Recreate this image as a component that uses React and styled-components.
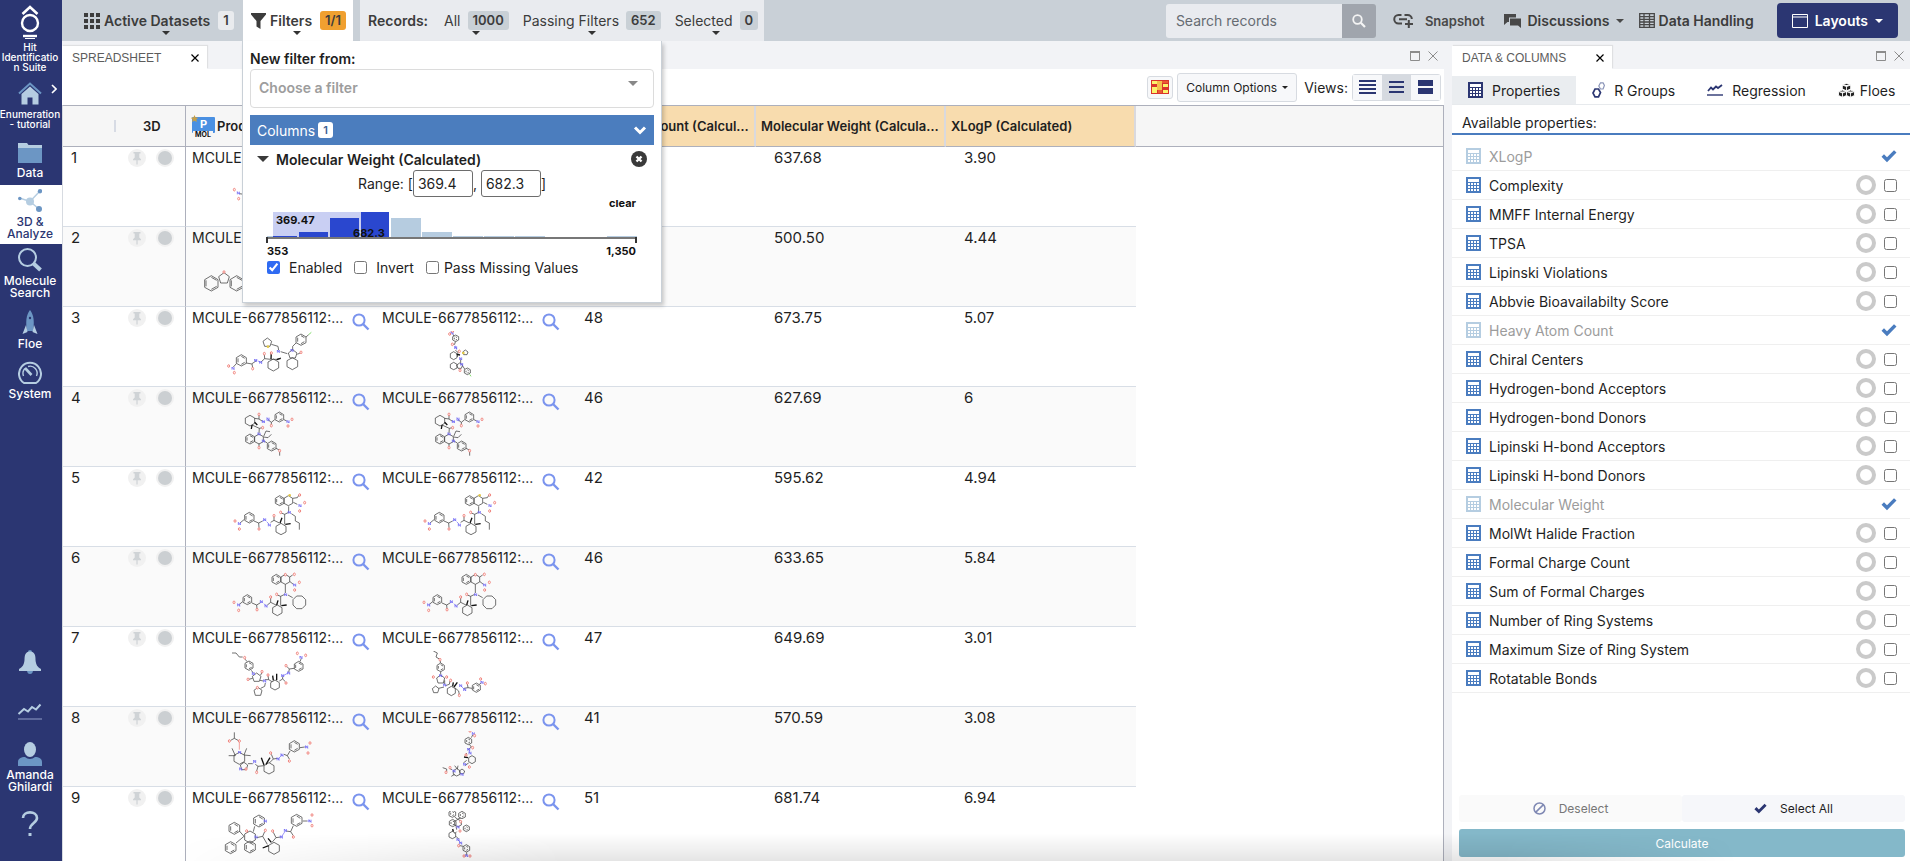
import React from "react";
import styled, { createGlobalStyle } from "styled-components";

const NAVY = "#2b3672";

const properties = [
  { name: "XLogP", added: true },
  { name: "Complexity" },
  { name: "MMFF Internal Energy" },
  { name: "TPSA" },
  { name: "Lipinski Violations" },
  { name: "Abbvie Bioavailabilty Score" },
  { name: "Heavy Atom Count", added: true },
  { name: "Chiral Centers" },
  { name: "Hydrogen-bond Acceptors" },
  { name: "Hydrogen-bond Donors" },
  { name: "Lipinski H-bond Acceptors" },
  { name: "Lipinski H-bond Donors" },
  { name: "Molecular Weight", added: true },
  { name: "MolWt Halide Fraction" },
  { name: "Formal Charge Count" },
  { name: "Sum of Formal Charges" },
  { name: "Number of Ring Systems" },
  { name: "Maximum Size of Ring System" },
  { name: "Rotatable Bonds" },
];

// rings: [cx, cy, r, sides, aromatic], k: carbon bonds, b: nitrogen bonds,
// n / o / s: atom positions, f: fluorine bond, red: oxygen bond
const mol1 = {
  rings: [[190, 145, 17, 6, 1], [260, 160, 17, 6]],
  k: "M160 140L174 142M206 150L244 156",
  n: [[157, 138]],
  o: [[145, 128], [158, 155]],
};
const mol2 = {
  rings: [[76, 169, 23, 6, 1], [114, 154, 17, 5], [152, 169, 23, 6, 1]],
  o: [[114, 135]],
};
const mol3a = {
  rings: [[166, 160, 17, 6, 1], [262, 174, 18, 6], [319, 170, 18, 6], [345, 98, 17, 6, 1], [244, 107, 14, 5], [320, 142, 14, 5]],
  k: "M151 170L142 180M181 168L198 171L200 182M198 170L210 162M225 165L236 155L235 142M236 155L254 157L272 157L285 153M256 112L276 118L278 130M284 134L304 140M320 128L320 118L330 108M360 90L368 83M334 142L344 137",
  bold: "M255 156L256 136M272 158L284 154",
  b: "M207 162L214 159M216 162L224 166",
  n: [[209, 160], [224, 166], [277, 133], [318, 130], [141, 184]],
  o: [[128, 177], [145, 197], [200, 185], [235, 140], [345, 136], [256, 138]],
  s: [[246, 119]],
  f: "M368 83L376 76",
};
const mol3b = {
  rings: [[239, 94, 10, 6, 1], [233, 146, 12, 6], [233, 177, 11, 6], [251, 177, 9, 5], [274, 193, 10, 6, 1], [268, 137, 8, 5]],
  k: "M231 82L234 88M238 104L236 112L230 112M238 130L246 136L244 150M254 157L254 170M258 174L266 186",
  bold: "M242 142L252 144",
  b: "M238 116L242 128",
  n: [[228, 78], [239, 122], [254, 155], [257, 172]],
  o: [[221, 81], [230, 72], [229, 112], [250, 133], [252, 190]],
  s: [[262, 138]],
  f: "M281 202L285 208",
};
const mol4 = {
  rings: [[192, 101, 16, 6], [280, 90, 15, 6, 1], [192, 156, 15, 6, 1], [219, 156, 15, 6], [257, 177, 15, 6, 1]],
  k: "M206 94L219 96L219 84M219 96L228 102M246 98L256 106L266 98M256 106L256 114M294 98L302 102M198 114L220 124L230 122M220 124L219 138M233 148L240 132L252 134M233 150L246 152L256 142M219 170L219 178M234 162L244 168M270 184L280 189M281 194L281 206",
  bold: "M206 106L214 114M198 114L196 126",
  b: "M228 102L236 104M242 99L250 102",
  n: [[232, 104], [246, 96], [306, 104], [219, 141], [232, 162]],
  o: [[219, 82], [256, 116], [318, 97], [306, 117], [230, 122], [219, 182], [281, 191]],
};
const mol5 = {
  rings: [[281, 101, 15, 6, 1], [307, 101, 15, 6], [190, 152, 16, 6, 1], [285, 186, 17, 6]],
  k: "M174 158L162 168M204 162L218 168L219 182M218 168L230 162M254 166L264 160L264 148M264 160L280 168M296 172L296 142L286 138M296 142L308 136L308 118M316 140L328 148L328 162L340 168L340 188M320 94L334 92L339 84M322 106L334 112",
  bold: "M282 168L288 152M298 172L314 170",
  b: "M230 162L236 160M242 164L248 170",
  n: [[160, 170], [236, 158], [250, 174], [310, 136], [342, 116]],
  o: [[147, 162], [160, 186], [219, 186], [264, 146], [284, 136], [341, 84], [356, 107], [341, 132]],
  s: [[311, 85]],
};
const mol6 = {
  rings: [[271, 97, 15, 6, 1], [298, 97, 15, 6], [184, 158, 15, 6, 1], [274, 190, 16, 6], [340, 166, 21, 8]],
  k: "M170 164L160 172M198 168L212 174L213 186M212 174L222 168M244 174L254 166L254 152M254 166L270 174M284 176L284 148L274 144M284 148L296 142M298 138L298 112M306 144L320 152M311 90L320 84M312 104L322 112",
  bold: "M272 174L276 160M286 176L302 174",
  b: "M222 168L228 164M234 170L240 176",
  n: [[158, 174], [226, 164], [240, 177], [299, 143], [326, 114]],
  o: [[144, 166], [158, 190], [213, 188], [254, 150], [272, 142], [298, 83], [325, 82], [340, 106], [326, 129]],
};
const mol7a = {
  rings: [[189, 116, 14, 6, 1], [212, 152, 14, 5], [267, 174, 15, 6], [216, 194, 13, 5], [338, 118, 15, 6, 1]],
  k: "M138 78L150 78L160 90L170 90M176 96L184 104M196 130L202 138M224 144L228 136M200 154L188 157M222 160L232 162M236 158L248 158L246 146M248 158L258 164M238 168L236 178L224 184M280 162L290 156L298 164M290 156L290 148M308 136L310 126L302 118M310 126L324 124M342 104L346 94",
  bold: "M272 160L272 140M262 160L260 146",
  b: "M292 146L306 138",
  n: [[202, 140], [236, 162], [290, 146], [308, 138], [345, 91]],
  o: [[176, 92], [228, 134], [186, 157], [246, 144], [300, 168], [300, 116], [334, 79], [359, 85], [214, 182]],
};
const mol7b = {
  rings: [[194, 121, 13, 6, 1], [194, 157, 13, 5], [226, 192, 14, 6], [179, 188, 11, 5], [301, 182, 14, 6, 1]],
  k: "M172 72L184 78L180 90L190 96M193 108L193 102M194 134L194 142M208 176L220 172L222 162M206 160L206 172M204 180L188 184M236 182L248 192L250 204M264 184L276 182L274 170M276 182L288 184M310 172L316 168",
  bold: "M234 180L244 166M230 178L232 166",
  b: "M256 178L264 186",
  n: [[194, 146], [206, 174], [254, 176], [266, 188], [318, 166]],
  o: [[192, 98], [172, 150], [212, 150], [224, 160], [250, 205], [274, 168], [314, 156], [328, 170]],
};
const mol8a = {
  rings: [[325, 118, 17, 6, 1], [160, 154, 18, 6], [174, 178, 12, 5], [249, 184, 17, 6]],
  k: "M145 76L145 94L134 100M145 94L156 100M138 124L148 146L128 146M182 124L174 144L194 146M186 170L200 170M208 172L216 178L212 192M216 178L234 176M250 168L262 156L256 142M262 156L274 154M294 142L304 146L310 156M304 146L312 132M342 122L356 120",
  bold: "M234 174L226 152M240 172L252 152",
  b: "M200 170L206 164M276 156L288 144M356 120L362 120",
  red: "M160 106L160 128",
  n: [[161, 136], [206, 163], [276, 156], [288, 144], [362, 120], [164, 186]],
  o: [[130, 102], [160, 102], [180, 186], [212, 196], [254, 138], [310, 162], [372, 108], [366, 138]],
};
const mol8b = {
  rings: [[277, 102, 11, 6, 1], [288, 158, 12, 6], [242, 196, 11, 6], [258, 194, 8, 5]],
  k: "M286 92L290 84M280 112L286 120L276 128M272 138L268 146M278 168L266 176M272 160L262 168M200 182L212 186L212 194M220 184L228 188M236 176L244 186M226 208L236 202M246 176L244 186",
  bold: "M276 152L264 150",
  b: "M278 126L282 138",
  n: [[292, 80], [278, 127], [282, 138], [266, 172], [234, 192], [258, 202]],
  o: [[282, 72], [296, 86], [290, 122], [270, 144], [222, 182], [210, 196], [280, 180]],
};
const mol9a = {
  rings: [[145, 124, 18, 6, 1], [134, 182, 18, 6, 1], [219, 102, 18, 6, 1], [192, 150, 18, 6], [192, 180, 18, 6, 1], [264, 184, 18, 6], [332, 100, 18, 6, 1]],
  k: "M160 132L174 148L150 168M202 134L206 118M212 152L230 148L236 134M230 148L244 172M258 166L270 152L262 136M270 152L284 150M300 132L314 134L322 146M314 134L322 116M350 102L364 102",
  bold: "M248 176L230 183M256 166L246 154",
  b: "M286 150L298 132M364 102L372 102",
  n: [[210, 150], [286, 150], [298, 130], [372, 102], [238, 102]],
  o: [[182, 132], [238, 130], [260, 132], [322, 150], [378, 84], [378, 116]],
};
const mol9b = {
  rings: [[229, 80, 11, 6, 1], [258, 84, 11, 6, 1], [230, 108, 11, 6, 1], [246, 108, 11, 6], [271, 124, 10, 6, 1], [229, 144, 11, 6], [271, 184, 11, 6, 1]],
  k: "M236 90L244 96L254 94M240 118L242 128M242 134L236 140M240 148L248 156M252 176L262 178M272 196L272 204",
  bold: "M232 134L230 126",
  b: "M246 158L254 168",
  n: [[246, 120], [246, 158], [254, 168], [272, 206]],
  o: [[254, 104], [252, 132], [248, 176], [264, 207], [282, 207]],
};

const records = [
  { id: 1, count: 47, weight: "637.68", logp: "3.90", product: mol1, reagent: mol1 },
  { id: 2, count: 37, weight: "500.50", logp: "4.44", product: mol2, reagent: mol2 },
  { id: 3, count: 48, weight: "673.75", logp: "5.07", product: mol3a, reagent: mol3b },
  { id: 4, count: 46, weight: "627.69", logp: "6", product: mol4, reagent: mol4 },
  { id: 5, count: 42, weight: "595.62", logp: "4.94", product: mol5, reagent: mol5 },
  { id: 6, count: 46, weight: "633.65", logp: "5.84", product: mol6, reagent: mol6 },
  { id: 7, count: 47, weight: "649.69", logp: "3.01", product: mol7a, reagent: mol7b },
  { id: 8, count: 41, weight: "570.59", logp: "3.08", product: mol8a, reagent: mol8b },
  { id: 9, count: 51, weight: "681.74", logp: "6.94", product: mol9a, reagent: mol9b },
];

const polygon = (cx, cy, r, n) =>
  Array.from({ length: n }, (_, i) => {
    const a = ((i + (n === 8 ? 0.5 : 0)) / n) * Math.PI * 2 - Math.PI / 2;
    return `${Math.round(cx + r * Math.cos(a))},${Math.round(cy + r * Math.sin(a))}`;
  });

const Molecule = ({ data }) => (
  <MoleculeSvg viewBox='0 72 570 156' aria-hidden='true'>
    <g fill='none' stroke='#3c3c3c' strokeWidth='2.2' strokeLinejoin='round'>
      {data.rings.map(([cx, cy, r, n, aromatic], i) => {
        const inner = polygon(cx, cy, r - 5, n);
        return (
          <g key={i}>
            <polygon points={polygon(cx, cy, r, n).join(" ")} />
            {aromatic &&
              [0, 2, 4].map((k) => (
                <polyline key={k} points={`${inner[k]} ${inner[k + 1] || inner[0]}`} />
              ))}
          </g>
        );
      })}
      {data.k && <path d={data.k} />}
      {data.bold && <path d={data.bold} stroke='#111' strokeWidth='4' />}
      {data.b && <path d={data.b} stroke='#7a74f5' />}
      {data.red && <path d={data.red} stroke='#f07f78' />}
      {data.f && <path d={data.f} stroke='#7fdc6a' strokeWidth='3' />}
    </g>
    {(data.n || []).map(([x, y], i) => (
      <path
        key={i}
        d={`M${x - 3} ${y + 4}v-8l6 8v-8`}
        fill='none'
        stroke='#6c64f5'
        strokeWidth='2.4'
      />
    ))}
    {data.o.map(([x, y], i) => (
      <ellipse key={i} cx={x} cy={y} rx='3' ry='4' fill='#fff' stroke='#ee6f67' strokeWidth='2.4' />
    ))}
    {(data.s || []).map(([x, y], i) => (
      <circle key={i} cx={x} cy={y} r='4' fill='#e3c94b' />
    ))}
  </MoleculeSvg>
);

const CalculatorIcon = ({ color }) => (
  <svg width='15' height='16' viewBox='0 0 15 16' shapeRendering='crispEdges' aria-hidden='true'>
    <path d='M0 0h15v16H0z' fill={color} />
    <path d='M2 2h11v3H2z' fill='#fff' />
    {[6, 9, 12].map((y) =>
      [2, 5, 8, 11].map((x) => (
        <rect key={`${x}-${y}`} x={x} y={y} width='2' height='2' fill='#fff' />
      ))
    )}
  </svg>
);

const CheckIcon = ({ color, size = 16 }) => (
  <svg width={size} height={size} viewBox='0 0 16 16' aria-hidden='true'>
    <path d='M0.5 8.8L3 6.2L6 9.2L13 2.2L15.5 4.6L6 14.2Z' fill={color} />
  </svg>
);

const GridIcon = () => (
  <svg width='16' height='16' viewBox='0 0 16 16' fill='#3c3c3c' aria-hidden='true'>
    {[0, 6, 12].map((y) =>
      [0, 6, 12].map((x) => <rect key={`${x}-${y}`} x={x} y={y} width='4' height='4' />)
    )}
  </svg>
);

const MagnifierIcon = () => (
  <svg width='18' height='18' viewBox='0 0 18 18' fill='none' stroke='#7b94ee' aria-hidden='true'>
    <circle cx='7' cy='7' r='5.6' strokeWidth='2' />
    <path d='M11 11L16.5 16.5' strokeWidth='2.4' />
  </svg>
);

const PinIcon = () => (
  <svg width='18' height='18' viewBox='0 0 18 18' aria-hidden='true'>
    <circle cx='9' cy='9' r='9' fill='#f1f1f1' />
    <path d='M5.5 3h7v1.6h-1.2v4l1.7 1.6v1H9.6v4.3H8.4v-4.3H5v-1l1.7-1.6v-4H5.5z' fill='#cfd3d6' />
  </svg>
);

const DotIcon = () => (
  <svg width='18' height='18' viewBox='0 0 18 18' aria-hidden='true'>
    <circle cx='9' cy='9' r='9' fill='#f1f1f1' />
    <circle cx='9' cy='9' r='7' fill='#cbcfd2' />
  </svg>
);

const WindowControls = () => (
  <Controls>
    <IconButton aria-label='Maximize panel'>
      <svg width='10' height='10' viewBox='0 0 10 10' aria-hidden='true'>
        <path d='M0.5 1h9v8.5h-9z' fill='none' stroke='#8c8c8c' />
        <path d='M0 1h10' stroke='#8c8c8c' strokeWidth='2' />
      </svg>
    </IconButton>
    <IconButton aria-label='Close panel'>
      <svg width='10' height='10' viewBox='0 0 10 10' aria-hidden='true'>
        <path d='M0.5 0.5l9 9M9.5 0.5l-9 9' stroke='#8c8c8c' />
      </svg>
    </IconButton>
  </Controls>
);

const PanelTab = ({ children }) => (
  <Tab>
    {children}
    <IconButton aria-label='Close tab'>
      <svg width='8' height='8' viewBox='0 0 8 8' aria-hidden='true'>
        <path d='M0.5 0.5l7 7M7.5 0.5l-7 7' stroke='#000' strokeWidth='1.2' />
      </svg>
    </IconButton>
  </Tab>
);

const Sidebar = () => (
  <Rail>
    <RailItem href='#suite' $top={5} $small>
      <svg width='20' height='34' viewBox='0 0 20 34' fill='none' stroke='#fff' aria-hidden='true'>
        <path d='M2.5 9L10 2L17.5 9' strokeWidth='2.6' />
        <circle cx='10' cy='18' r='8' strokeWidth='2.4' />
        <path d='M3 31h14' strokeWidth='2.4' />
        <path d='M5 33.5h10' strokeWidth='1' />
      </svg>
      <span>
        Hit
        <br />
        Identificatio
        <br />n Suite
      </span>
    </RailItem>
    <RailItem href='#project' $top={10} $small>
      <svg width='24' height='24' viewBox='0 0 24 24' aria-hidden='true'>
        <path d='M1 11.5L12 1.5L23 11.5' fill='none' stroke='#6c96c4' strokeWidth='2' />
        <path d='M3.5 12L12 4.5L20.5 12V22.5H14.5V15.5H9.5V22.5H3.5Z' fill='#b5cde1' />
      </svg>
      <span>
        Enumeration
        <br />- tutorial
      </span>
      <Chevron viewBox='0 0 6 10' aria-hidden='true'>
        <path d='M1 1l4 4l-4 4' fill='none' stroke='#fff' strokeWidth='1.6' />
      </Chevron>
    </RailItem>
    <RailItem href='#data' $top={13}>
      <svg width='24' height='22' viewBox='0 0 24 22' aria-hidden='true'>
        <path d='M0 1h9l1.5 2H24v3H0z' fill='#b5cde1' />
        <path d='M0 6h24v15H0z' fill='#6c96c4' />
      </svg>
      <span>Data</span>
    </RailItem>
    <RailItem href='#analyze' $top={4} $active>
      <svg width='24' height='24' viewBox='0 0 24 24' aria-hidden='true'>
        <path d='M1.5 9L12 12.5L22 2M12 12.5L21 20' stroke='#b5cde1' strokeWidth='1.5' fill='none' />
        <circle cx='12' cy='12.5' r='4' fill='#b5cde1' />
        <circle cx='1.8' cy='9.5' r='1.8' fill='#6c96c4' />
        <circle cx='22' cy='2.2' r='2.2' fill='#6c96c4' />
        <circle cx='21' cy='20' r='3' fill='#6c96c4' />
      </svg>
      <span>
        3D &amp;
        <br />
        Analyze
      </span>
    </RailItem>
    <RailItem href='#search' $top={4}>
      <svg width='24' height='24' viewBox='0 0 24 24' aria-hidden='true'>
        <circle cx='9.5' cy='9.5' r='8.5' fill='none' stroke='#b5cde1' strokeWidth='2' />
        <path d='M15.5 15.5L22.5 22' stroke='#b5cde1' strokeWidth='4' />
      </svg>
      <span>
        Molecule
        <br />
        Search
      </span>
    </RailItem>
    <RailItem href='#floe' $top={11}>
      <svg width='16' height='25' viewBox='0 0 16 25' aria-hidden='true'>
        <path d='M8 0C12 5 12.5 12 11 21H5C3.5 12 4 5 8 0Z' fill='#6c96c4' />
        <path d='M4 15L0.5 24L5.5 22ZM12 15L15.5 24L10.5 22Z' fill='#b5cde1' />
        <circle cx='8' cy='8' r='1.2' fill={NAVY} />
      </svg>
      <span>Floe</span>
    </RailItem>
    <RailItem href='#system' $top={11}>
      <svg width='24' height='24' viewBox='0 0 24 24' fill='none' stroke='#b5cde1' aria-hidden='true'>
        <path d='M6 22A11 11 0 1 1 18 22Z' strokeWidth='2' />
        <path d='M5.5 15A7 7 0 0 1 7 7.5M10 5.5A7 7 0 0 1 18.5 15' strokeWidth='1.4' />
        <path d='M13.5 14L7 7' strokeWidth='2.6' />
      </svg>
      <span>System</span>
    </RailItem>
    <RailSpacer />
    <RailItem href='#alerts' aria-label='Notifications'>
      <svg width='22' height='25' viewBox='0 0 22 25' aria-hidden='true'>
        <circle cx='11' cy='2' r='2' fill='#6c96c4' />
        <path d='M8 20h6a3 4 0 0 1-6 0z' fill='#6c96c4' />
        <path d='M11 1.5C16 1.5 16.5 6 16.5 10C17 15 18.5 17 22 19V21H0V19C3.5 17 5 15 5.5 10C5.5 6 6 1.5 11 1.5Z' fill='#b5cde1' />
      </svg>
    </RailItem>
    <RailItem href='#metrics' $top={28} aria-label='Metrics'>
      <svg width='26' height='17' viewBox='0 0 26 17' fill='none' aria-hidden='true'>
        <path d='M1.5 11L7 6L11 8.5L15 4L19 6.5L23.5 1.5' stroke='#b5cde1' strokeWidth='2' />
        <path d='M1 16h24' stroke='#6c78a8' strokeWidth='1.6' />
      </svg>
    </RailItem>
    <RailItem href='#account' $top={22}>
      <svg width='24' height='24' viewBox='0 0 24 24' aria-hidden='true'>
        <path d='M0 24V20C0 16.5 3 15 7 15C10 17.5 14 17.5 17 15C21 15 24 16.5 24 20V24Z' fill='#6c96c4' />
        <ellipse cx='12' cy='7.5' rx='6' ry='7.5' fill='#b5cde1' />
      </svg>
      <span>
        Amanda
        <br />
        Ghilardi
      </span>
    </RailItem>
    <RailItem href='#help' $top={18} aria-label='Help'>
      <svg width='18' height='26' viewBox='0 0 18 26' aria-hidden='true'>
        <path d='M2 7C2 -0.5 16 -0.5 16 7C16 12 9 12 9 18' fill='none' stroke='#b5cde1' strokeWidth='2.6' />
        <rect x='7.5' y='22' width='3' height='3' fill='#b5cde1' />
      </svg>
    </RailItem>
  </Rail>
);

const Histogram = () => (
  <svg width='388' height='57' viewBox='0 0 388 57' role='img' aria-label='Molecular weight distribution'>
    <rect x='8' y='12' width='116' height='25' fill='#c9cff3' />
    <rect x='2' y='36' width='30' height='1' fill='#b6cce0' />
    <rect x='8' y='36' width='24' height='1' fill='#2a47cf' />
    <rect x='34' y='32' width='29' height='5' fill='#2a47cf' />
    <rect x='65' y='18' width='29' height='19' fill='#2a47cf' />
    <rect x='96' y='12' width='28' height='25' fill='#2a47cf' />
    <rect x='126' y='18' width='30' height='19' fill='#b6cce0' />
    <rect x='157' y='32' width='30' height='5' fill='#b6cce0' />
    <rect x='188' y='36' width='30' height='1' fill='#b6cce0' />
    <rect x='219' y='36' width='30' height='1' fill='#b6cce0' />
    <rect x='250' y='36' width='30' height='1' fill='#b6cce0' />
    <rect x='342' y='36' width='30' height='1' fill='#b6cce0' />
    <path d='M2 38h370' stroke='#777' strokeWidth='2' />
    <path d='M2 37v6M371 37v6' stroke='#333' strokeWidth='2' />
    <g fontFamily='Inter, sans-serif' fontSize='11' fontWeight='700' fill='#111'>
      <text x='371' y='7' textAnchor='end'>clear</text>
      <text x='11' y='24'>369.47</text>
      <text x='88' y='37'>682.3</text>
      <text x='2' y='55'>353</text>
      <text x='371' y='55' textAnchor='end'>1,350</text>
    </g>
  </svg>
);

const FilterPanel = () => (
  <Dropdown>
    <FieldLabel htmlFor='new-filter'>New filter from:</FieldLabel>
    <FilterSelectBox>
      <FilterSelect id='new-filter' defaultValue=''>
        <option value=''>Choose a filter</option>
      </FilterSelect>
      <Caret $color='#888' $size={5} />
    </FilterSelectBox>
    <ColumnsBar>
      Columns <WhiteBadge>1</WhiteBadge>
      <svg width='14' height='14' viewBox='0 0 14 14' aria-hidden='true'>
        <path d='M2 4.5l5 5l5-5' fill='none' stroke='#fff' strokeWidth='3' />
      </svg>
    </ColumnsBar>
    <FilterTitle>
      <Caret $color='#3a3a3a' $size={6} />
      <strong>Molecular Weight (Calculated)</strong>
      <IconButton aria-label='Remove filter'>
        <svg width='16' height='16' viewBox='0 0 16 16' aria-hidden='true'>
          <circle cx='8' cy='8' r='8' fill='#3a3a3a' />
          <path d='M5.5 5.5l5 5M10.5 5.5l-5 5' stroke='#fff' strokeWidth='2.4' />
        </svg>
      </IconButton>
    </FilterTitle>
    <RangeRow>
      Range: [
      <RangeInput aria-label='Range minimum' defaultValue='369.4' />
      <RangeComma>,</RangeComma>
      <RangeInput aria-label='Range maximum' defaultValue='682.3' />]
    </RangeRow>
    <ChartBox>
      <Histogram />
    </ChartBox>
    <CheckRow>
      <CheckLabel $gap={9}>
        <Checkbox type='checkbox' defaultChecked />
        Enabled
      </CheckLabel>
      <CheckLabel $gap={9}>
        <Checkbox type='checkbox' />
        Invert
      </CheckLabel>
      <CheckLabel $gap={5}>
        <Checkbox type='checkbox' />
        Pass Missing Values
      </CheckLabel>
    </CheckRow>
  </Dropdown>
);

const TopBar = () => (
  <Bar>
    <DatasetsButton>
      <GridIcon />
      <TopLabel>
        Active Datasets
        <Caret $color='#333' $size={4} />
      </TopLabel>
      <Badge $bg='#e9ebee'>1</Badge>
    </DatasetsButton>
    <FiltersTab>
      <FiltersButton>
        <svg width='15' height='16' viewBox='0 0 15 16' aria-hidden='true'>
          <path d='M0 0h15v1.5L9.5 8v8L5.5 13.5V8L0 1.5z' fill='#3c3c3c' />
        </svg>
        <TopLabel>
          Filters
          <Caret $color='#333' $size={4} />
        </TopLabel>
        <Badge $bg='#f0a030'>1/1</Badge>
      </FiltersButton>
      <FilterPanel />
    </FiltersTab>
    <Records>
      <strong>Records:</strong>
      <RecordButton>
        <span>All</span>
        <Badge $bg='#c9d0d6'>1000</Badge>
        <Caret $color='#333' $size={4} />
      </RecordButton>
      <RecordButton>
        <span>Passing Filters</span>
        <Badge $bg='#c9d0d6'>652</Badge>
        <Caret $color='#333' $size={4} />
      </RecordButton>
      <RecordButton>
        <span>Selected</span>
        <Badge $bg='#c9d0d6'>0</Badge>
        <Caret $color='#333' $size={4} />
      </RecordButton>
    </Records>
    <Grow />
    <Search role='search'>
      <SearchInput placeholder='Search records' aria-label='Search records' />
      <SearchButton aria-label='Search'>
        <svg width='14' height='14' viewBox='0 0 14 14' fill='none' stroke='#f4f4f4' aria-hidden='true'>
          <circle cx='5.5' cy='5.5' r='4.3' strokeWidth='1.8' />
          <path d='M8.8 8.8L13 13' strokeWidth='2.2' />
        </svg>
      </SearchButton>
    </Search>
    <Snapshot>
      <svg width='20' height='14' viewBox='0 0 20 14' fill='none' stroke='#484848' strokeWidth='2' aria-hidden='true'>
        <path d='M8.5 1H5.5A4.2 4.2 0 0 0 5.5 9.5H9M11.5 1H14.5C17 1 18.8 2.8 18.8 5M6 5.3H14M15.8 6V14M12 10H20' />
      </svg>
      Snapshot
    </Snapshot>
    <ActionButton $left={20} $gap={6}>
      <svg width='17' height='14' viewBox='0 0 17 14' fill='#484848' aria-hidden='true'>
        <path d='M0 0h12v3.5H5V8H3.5L0 11z' />
        <path d='M6 4.5h11V14L14 11.5H6z' />
      </svg>
      Discussions
      <Caret $color='#484848' $size={4} />
    </ActionButton>
    <ActionButton $left={15} $gap={4}>
      <svg width='16' height='15' viewBox='0 0 16 15' fill='none' stroke='#484848' strokeWidth='1.3' aria-hidden='true'>
        <path d='M0.7 0.7h14.6v13.6H0.7zM0.7 3.6h14.6M0.7 6.3h14.6M0.7 9h14.6M0.7 11.7h14.6M5 0.7v13.6M10.5 0.7v13.6' />
      </svg>
      Data Handling
    </ActionButton>
    <LayoutsButton>
      <svg width='16' height='14' viewBox='0 0 16 14' fill='none' stroke='#fff' aria-hidden='true'>
        <path d='M0.5 0.5h15v13h-15zM0.5 3h15' />
      </svg>
      Layouts
      <Caret $color='#fff' $size={4} />
    </LayoutsButton>
  </Bar>
);

const MoleculeCell = ({ data }) => (
  <td>
    <MoleculeHead>
      <span>MCULE-6677856112:...</span>
      <IconButton aria-label='View molecule'>
        <MagnifierIcon />
      </IconButton>
    </MoleculeHead>
    <Molecule data={data} />
  </td>
);

const Spreadsheet = () => (
  <SheetPanel>
    <PanelHeader>
      <PanelTab>SPREADSHEET</PanelTab>
      <Grow />
      <WindowControls />
    </PanelHeader>
    <Toolbar>
      <HeatButton aria-label='Color scale'>
        <svg width='18' height='14' viewBox='0 0 18 14' aria-hidden='true'>
          <rect width='18' height='14' fill='#d9342c' />
          <path d='M1 1h5v3H1zM1 7h5v6H1zM12 4h5v3h-5zM12 10h5v3h-5z' fill='#fbf46d' />
          <path d='M6 1h5v9H6z' fill='#f5bf4c' />
          <path d='M11 1h6v2h-6zM7 10h4v3H7z' fill='#ea5a35' />
        </svg>
      </HeatButton>
      <OptionsButton>
        Column Options
        <Caret $color='#222' $size={3} />
      </OptionsButton>
      <ViewsLabel>Views:</ViewsLabel>
      <ViewGroup>
        <ViewButton aria-label='Compact rows'>
          <svg width='17' height='14' viewBox='0 0 17 14' stroke={NAVY} strokeWidth='2' aria-hidden='true'>
            <path d='M0 1h17M0 5h17M0 9h17M0 13h17' />
          </svg>
        </ViewButton>
        <ViewButton $on aria-label='Medium rows'>
          <svg width='15' height='14' viewBox='0 0 15 14' stroke={NAVY} strokeWidth='2' aria-hidden='true'>
            <path d='M0 2h15M0 7h15M0 12h15' />
          </svg>
        </ViewButton>
        <ViewButton aria-label='Tall rows'>
          <svg width='15' height='14' viewBox='0 0 15 14' fill={NAVY} aria-hidden='true'>
            <path d='M0 0h15v6H0zM0 8h15v6H0z' />
          </svg>
        </ViewButton>
      </ViewGroup>
    </Toolbar>
    <TableArea>
      <Table>
        <colgroup>
          <IndexCol />
          <DataCol span='5' />
          <col />
        </colgroup>
        <thead>
          <tr>
            <th>
              <ThreeD>3D</ThreeD>
            </th>
            <th>
              <ProductHead>
                <svg width='24' height='22' viewBox='0 0 24 22' aria-hidden='true'>
                  <rect x='1' y='2' width='23' height='16' rx='1' fill='#4a90e2' />
                  <text x='9' y='13' fontFamily='Inter, sans-serif' fontSize='11' fontWeight='700' fill='#fff'>P</text>
                  <path d='M2 16h20v6H2z' fill='#f5f5f5' />
                  <text x='4' y='22' fontFamily='Inter, sans-serif' fontSize='7' fontWeight='700' fill='#111'>MOL</text>
                  <path d='M3.5 0l1.1 2.4 2.6.3-1.9 1.8.5 2.6-2.3-1.3L1.2 7.1l.5-2.6L-.2 2.7l2.6-.3z' fill='#c9a045' />
                </svg>
                Product
              </ProductHead>
            </th>
            <th>Reagent</th>
            <CalcTh>Heavy Atom Count (Calculated)</CalcTh>
            <CalcTh>Molecular Weight (Calculated)</CalcTh>
            <CalcTh>XLogP (Calculated)</CalcTh>
            <th aria-label='Empty' />
          </tr>
        </thead>
        <tbody>
          {records.map((row) => (
            <tr key={row.id}>
              <IndexTd>
                <RowHead>
                  <span>{row.id}</span>
                  <IconButton aria-label='Pin record'>
                    <PinIcon />
                  </IconButton>
                  <IconButton aria-label='Show in 3D'>
                    <DotIcon />
                  </IconButton>
                </RowHead>
              </IndexTd>
              <MoleculeCell data={row.product} />
              <MoleculeCell data={row.reagent} />
              <NumberTd>{row.count}</NumberTd>
              <NumberTd>{row.weight}</NumberTd>
              <NumberTd>{row.logp}</NumberTd>
              <td />
            </tr>
          ))}
        </tbody>
      </Table>
    </TableArea>
  </SheetPanel>
);

const DataPanel = () => (
  <SidePanel>
    <PanelHeader>
      <PanelTab>DATA &amp; COLUMNS</PanelTab>
      <Grow />
      <WindowControls />
    </PanelHeader>
    <SideTabs>
      <SideTab $on>
        <CalculatorIcon color={NAVY} />
        Properties
      </SideTab>
      <SideTab>
        <svg width='13' height='16' viewBox='0 0 13 16' fill='none' aria-hidden='true'>
          <path d='M8.5 0.8h2.6L12.4 3.5 11.1 7H8.5L6.8 4z' stroke='#8b95b8' strokeWidth='1.2' />
          <path d='M3 7h3.5L8.5 10.5 6.5 14.8H3L1 11z' stroke={NAVY} strokeWidth='1.7' />
        </svg>
        R Groups
      </SideTab>
      <SideTab>
        <svg width='16' height='12' viewBox='0 0 16 12' fill='none' stroke={NAVY} aria-hidden='true'>
          <path d='M1 7L4 3.5L6 5.5L9 2.5L11 4L15 1' strokeWidth='1.8' />
          <path d='M0 11h16' strokeWidth='1.4' />
        </svg>
        Regression
      </SideTab>
      <SideTab $gap={5}>
        <svg width='17' height='15' viewBox='0 0 17 15' fill='#222' stroke='#fff' strokeWidth='0.9' aria-hidden='true'>
          <path d='M4.3 2L8.5 0.5L12.7 2V6L8.5 7.8L4.3 6zM8.5 3.5V7.8M4.3 2L8.5 3.5L12.7 2' />
          <path d='M0.5 8.5L4.5 7L8.5 8.5V12.5L4.5 14.3L0.5 12.5zM4.5 10V14.3M0.5 8.5L4.5 10L8.5 8.5' />
          <path d='M8.5 8.5L12.5 7L16.5 8.5V12.5L12.5 14.3L8.5 12.5zM12.5 10V14.3M8.5 8.5L12.5 10L16.5 8.5' />
        </svg>
        Floes
      </SideTab>
    </SideTabs>
    <Available>Available properties:</Available>
    <PropertyList>
      {properties.map(({ name, added }) => (
        <PropertyRow key={name} $added={added}>
          <CalculatorIcon color={added ? "#b5cde1" : "#4a7cbf"} />
          {added ? (
            <>
              <PropertyName>{name}</PropertyName>
              <CheckIcon color='#4a7cbf' />
            </>
          ) : (
            <>
              <PropertyName as='label' htmlFor={name}>
                {name}
              </PropertyName>
              <Ring />
              <Checkbox type='checkbox' id={name} />
            </>
          )}
        </PropertyRow>
      ))}
    </PropertyList>
    <Grow />
    <SelectRow>
      <PlainButton $muted disabled>
        <svg width='13' height='13' viewBox='0 0 13 13' fill='none' stroke='#7f88b3' strokeWidth='1.5' aria-hidden='true'>
          <circle cx='6.5' cy='6.5' r='5.5' />
          <path d='M2.6 10.4L10.4 2.6' />
        </svg>
        Deselect
      </PlainButton>
      <PlainButton>
        <CheckIcon color={NAVY} size={13} />
        Select All
      </PlainButton>
    </SelectRow>
    <CalculateButton disabled>Calculate</CalculateButton>
  </SidePanel>
);

const App = () => {
  return (
    <>
      <GlobalStyle />
      <Page>
        <Sidebar />
        <Main>
          <TopBar />
          <Workspace>
            <Spreadsheet />
            <DataPanel />
          </Workspace>
        </Main>
        <BottomShade />
      </Page>
    </>
  );
};

export default App;

const GlobalStyle = createGlobalStyle`
  * {
    box-sizing: border-box;
  }

  body {
    margin: 0;
    font-family: Inter, "Open Sans", sans-serif;
    font-size: 14px;
    color: #1f1f1f;
  }

  button, input, select {
    font: inherit;
    color: inherit;
  }

  button {
    border: 0;
    padding: 0;
    background: none;
    white-space: nowrap;
    cursor: pointer;
  }
`;

const Page = styled.div`
  position: relative;
  display: flex;
  height: 100vh;
  overflow: hidden;
  background-color: #f2f3f6;
`;

const Rail = styled.nav`
  display: flex;
  flex-direction: column;
  flex: none;
  width: 62px;
  padding-bottom: 24px;
  background-color: ${NAVY};
`;

const RailItem = styled.a`
  position: relative;
  display: flex;
  flex-direction: column;
  align-items: center;
  gap: 3px;
  padding-top: ${(p) => p.$top || 0}px;
  padding-right: 2px;
  padding-bottom: ${(p) => (p.$active ? 4 : 0)}px;
  margin-top: ${(p) => (p.$active ? 6 : 0)}px;
  font-size: ${(p) => (p.$small ? 10 : 12)}px;
  font-weight: 500;
  line-height: ${(p) => (p.$small ? 10 : 12)}px;
  text-align: center;
  text-decoration: none;
  white-space: nowrap;
  color: ${(p) => (p.$active ? NAVY : "#fff")};
  background-color: ${(p) => (p.$active ? "#fff" : "transparent")};

  svg {
    flex: none;
  }
`;

const Chevron = styled.svg`
  position: absolute;
  top: 12px;
  right: 5px;
  width: 6px;
  height: 10px;
`;

const RailSpacer = styled.div`
  flex: 1;
`;

const Main = styled.main`
  display: flex;
  flex-direction: column;
  flex: 1;
  min-width: 0;
`;

const Bar = styled.header`
  display: flex;
  align-items: center;
  flex: none;
  height: 41px;
  padding-right: 12px;
  background-color: #c9d0d7;
  color: #3c3c3c;
`;

const Grow = styled.div`
  flex: 1;
`;

const Caret = styled.i`
  display: inline-block;
  width: 0;
  height: 0;
  border-left: ${(p) => p.$size}px solid transparent;
  border-right: ${(p) => p.$size}px solid transparent;
  border-top: ${(p) => p.$size}px solid ${(p) => p.$color};
`;

const TopLabel = styled.span`
  position: relative;
  font-weight: 600;

  ${Caret} {
    position: absolute;
    left: 55%;
    bottom: -6px;
  }
`;

const Badge = styled.span`
  padding: 0 5px;
  border-radius: 3px;
  font-size: 13px;
  font-weight: 600;
  line-height: 19px;
  background-color: ${(p) => p.$bg};
`;

const DatasetsButton = styled.button`
  display: flex;
  align-items: center;
  width: 181px;
  height: 41px;
  padding-left: 22px;
  gap: 4px;

  ${Badge} {
    margin-left: 4px;
  }
`;

const FiltersTab = styled.div`
  position: relative;
  width: 110px;
  height: 41px;
  background-color: #fff;
`;

const FiltersButton = styled.button`
  display: flex;
  align-items: center;
  height: 41px;
  padding-left: 8px;
  gap: 4px;

  ${Badge} {
    margin-left: 4px;
  }
`;

const Dropdown = styled.div`
  position: absolute;
  top: 41px;
  left: -1px;
  z-index: 5;
  display: flex;
  flex-direction: column;
  width: 420px;
  height: 262px;
  padding: 8px 7px;
  border: 1px solid #c9d0d7;
  border-top: 0;
  background-color: #fff;
  box-shadow: 2px 3px 4px rgba(0, 0, 0, 0.2);
  color: #1f1f1f;
`;

const FieldLabel = styled.label`
  margin-bottom: 1px;
  font-weight: 600;
  line-height: 19px;
`;

const FilterSelectBox = styled.div`
  position: relative;
  flex: none;
  height: 39px;
  border: 1px solid #dcdcdc;
  border-radius: 4px;

  ${Caret} {
    position: absolute;
    top: 11px;
    right: 15px;
  }
`;

const FilterSelect = styled.select`
  appearance: none;
  width: 100%;
  height: 34px;
  padding: 0 8px;
  border: 0;
  background: none;
  font-weight: 600;
  color: #9d9d9d;
`;

const ColumnsBar = styled.div`
  display: flex;
  align-items: center;
  flex: none;
  height: 30px;
  margin-top: 7px;
  padding: 0 7px;
  gap: 3px;
  background-color: #4b7dbe;
  color: #fff;

  svg {
    margin-left: auto;
  }
`;

const WhiteBadge = styled.span`
  padding: 0 5px;
  border-radius: 3px;
  font-size: 11px;
  font-weight: 600;
  line-height: 16px;
  background-color: #fff;
  color: #3c5f94;
`;

const IconButton = styled.button`
  display: flex;
  align-items: center;
  justify-content: center;
`;

const FilterTitle = styled.div`
  display: flex;
  align-items: center;
  flex: none;
  height: 22px;
  margin-top: 3px;
  padding: 0 7px;
  gap: 7px;

  strong {
    font-weight: 600;
  }

  ${IconButton} {
    margin-left: auto;
  }
`;

const RangeRow = styled.div`
  display: flex;
  align-items: center;
  flex: none;
  height: 27px;
  padding-left: 108px;
  margin-bottom: 3px;
`;

const RangeComma = styled.span`
  width: 8px;
`;

const RangeInput = styled.input`
  width: 60px;
  height: 27px;
  padding: 0 4px;
  border: 1px solid #6d6d6d;
  border-radius: 3px;
  background-color: #fff;
`;

const ChartBox = styled.div`
  height: 57px;
  padding-left: 15px;
`;

const CheckRow = styled.div`
  display: flex;
  align-items: center;
  height: 20px;
  padding-left: 17px;
  gap: 12px;
`;

const CheckLabel = styled.label`
  display: flex;
  align-items: center;
  gap: ${(p) => p.$gap}px;
`;

const Checkbox = styled.input`
  flex: none;
  width: 13px;
  height: 13px;
  margin: 0;
  accent-color: #2f6bf2;
`;

const Records = styled.div`
  display: flex;
  align-items: center;
  height: 41px;
  margin-left: 7px;
  padding: 0 6px 0 8px;
  background-color: #e9ebef;

  strong {
    margin-right: 16px;
    font-weight: 600;
  }
`;

const RecordButton = styled.button`
  position: relative;
  display: flex;
  align-items: center;
  height: 41px;
  gap: 7px;

  & + & {
    margin-left: 14px;
  }

  ${Caret} {
    position: absolute;
    left: 50%;
    bottom: 6px;
    margin-left: -4px;
  }
`;

const Search = styled.form`
  display: flex;
  height: 34px;
`;

const SearchInput = styled.input`
  width: 176px;
  padding: 0 10px;
  border: 0;
  border-radius: 3px 0 0 3px;
  background-color: #e9ebef;

  &::placeholder {
    color: #666b72;
    opacity: 1;
  }
`;

const SearchButton = styled.button`
  display: flex;
  align-items: center;
  justify-content: center;
  width: 34px;
  border-radius: 0 3px 3px 0;
  background-color: #a0a5ad;
`;

const Snapshot = styled.button`
  display: flex;
  align-items: center;
  gap: 12px;
  margin-left: 17px;
  font-size: 13px;
  font-weight: 600;
  color: #484848;
`;

const ActionButton = styled.button`
  display: flex;
  align-items: center;
  gap: ${(p) => p.$gap}px;
  margin-left: ${(p) => p.$left}px;
  font-weight: 600;
`;

const LayoutsButton = styled.button`
  display: flex;
  align-items: center;
  height: 35px;
  gap: 7px;
  margin-left: 23px;
  padding: 0 15px;
  border-radius: 4px;
  background-color: ${NAVY};
  font-weight: 600;
  color: #fff;
`;

const Workspace = styled.div`
  display: flex;
  flex: 1;
  gap: 8px;
  min-height: 0;
`;

const SheetPanel = styled.section`
  display: flex;
  flex-direction: column;
  flex: 1;
  min-width: 0;
`;

const PanelHeader = styled.div`
  display: flex;
  align-items: flex-end;
  flex: none;
  height: 28px;
`;

const Tab = styled.div`
  display: flex;
  align-items: center;
  height: 23px;
  gap: 30px;
  padding: 0 8px 0 10px;
  background-color: #fff;
  box-shadow: 1px -1px 1px rgba(0, 0, 0, 0.08);
  font-family: "Liberation Sans", Arial, sans-serif;
  font-size: 12px;
  color: #5c5c5c;
`;

const Controls = styled.div`
  display: flex;
  gap: 8px;
  padding: 0 6px 8px 0;
`;

const Toolbar = styled.div`
  display: flex;
  align-items: center;
  justify-content: flex-end;
  flex: none;
  height: 36px;
  padding-right: 3px;
  background-color: #fff;
`;

const OptionsButton = styled.button`
  display: flex;
  align-items: center;
  height: 29px;
  gap: 5px;
  margin-left: 4px;
  padding: 0 8px;
  border: 1px solid #d7dbe1;
  border-radius: 3px;
  background-color: #f7f8fa;
  font-size: 12px;
`;

const HeatButton = styled(OptionsButton)`
  height: 23px;
  padding: 0 3px;
`;

const ViewsLabel = styled.span`
  margin: 0 4px 0 7px;
`;

const ViewGroup = styled.div`
  display: flex;
  height: 27px;
  border: 1px solid #d7dbe1;
  border-radius: 3px;
`;

const ViewButton = styled.button`
  display: flex;
  align-items: center;
  justify-content: center;
  width: 29px;
  background-color: ${(p) => (p.$on ? "#d6dae0" : "#f7f8fa")};
`;

const TableArea = styled.div`
  flex: 1;
  overflow: hidden;
  border-top: 1px solid #adb0bc;
  border-right: 1px solid #adb0bc;
  border-left: 1px solid #d7dbe1;
  background-color: #fff;
`;

const IndexCol = styled.col`
  width: 123px;
`;

const DataCol = styled.col`
  width: 190px;
`;

const Table = styled.table`
  width: 100%;
  table-layout: fixed;
  border-spacing: 0;

  th {
    height: 41px;
    padding: 0 5px;
    border-bottom: 1px solid #adb0bc;
    background-color: #f6f6f6;
    font-size: 13px;
    font-weight: 600;
    text-align: left;
    white-space: nowrap;
    overflow: hidden;
    text-overflow: ellipsis;
  }

  td {
    height: 80px;
    padding: 0 0 0 6px;
    border-bottom: 1px solid #d8dee6;
    vertical-align: top;
    font-size: 15px;
    line-height: 21px;
  }

  tbody tr:nth-child(even) td {
    background-color: #fafafa;
  }

  tr > :first-child {
    border-right: 1px solid #adb0bc;
  }

  tbody tr td:last-child {
    border-bottom: 0;
    background-color: #fff;
  }
`;

const CalcTh = styled.th`
  && {
    background-color: #f8dcae;
    border-right: 2px solid #d9d9de;
  }
`;

const ThreeD = styled.span`
  display: block;
  margin-left: 46px;
  padding-left: 27px;
  border-left: 2px solid #d7dbe4;
  line-height: 12px;
`;

const ProductHead = styled.span`
  display: flex;
  align-items: center;
  gap: 2px;
`;

const IndexTd = styled.td`
  && {
    padding-left: 8px;
  }
`;

const RowHead = styled.div`
  display: flex;
  align-items: center;
  gap: 10px;

  span {
    width: 47px;
  }
`;

const NumberTd = styled.td`
  && {
    padding-left: 18px;
  }
`;

const MoleculeHead = styled.div`
  display: flex;
  height: 24px;
  gap: 9px;
  font-size: 14px;
  white-space: nowrap;

  ${IconButton} {
    height: 30px;
  }
`;

const MoleculeSvg = styled.svg`
  display: block;
  width: 190px;
  height: 52px;
  margin-left: -6px;
`;

const SidePanel = styled.aside`
  display: flex;
  flex-direction: column;
  flex: none;
  width: 458px;
  padding-bottom: 4px;
  background: linear-gradient(#f2f3f6 28px, #fff 28px);
`;

const SideTabs = styled.div`
  display: flex;
  flex: none;
  height: 36px;
  padding-top: 7px;
  border-bottom: 1px solid #e7eaed;
`;

const SideTab = styled.button`
  display: flex;
  align-items: center;
  gap: ${(p) => p.$gap || 9}px;
  padding: 0 16px;
  background-color: ${(p) => (p.$on ? "#eaedf0" : "transparent")};
`;

const Available = styled.div`
  flex: none;
  height: 30px;
  padding: 9px 10px 0;
  border-bottom: 2px solid #4a7cbf;
  line-height: 18px;
`;

const PropertyList = styled.ul`
  margin: 0;
  padding: 7px 0 0;
  list-style: none;
`;

const PropertyRow = styled.li`
  display: flex;
  align-items: center;
  height: 29px;
  gap: 8px;
  padding: 0 13px 0 14px;
  border-bottom: 1px solid #efefef;
  color: ${(p) => (p.$added ? "#9c9c9c" : "#1f1f1f")};
`;

const PropertyName = styled.span`
  flex: 1;
`;

const Ring = styled.span`
  width: 20px;
  height: 20px;
  border: 4px solid #cacaca;
  border-radius: 50%;
`;

const SelectRow = styled.div`
  display: flex;
  padding: 0 5px 0 7px;
`;

const PlainButton = styled.button`
  display: flex;
  align-items: center;
  justify-content: center;
  flex: 1;
  height: 27px;
  gap: 13px;
  border-radius: 3px;
  background-color: ${(p) => (p.$muted ? "#fafafa" : "#f6f7fa")};
  font-size: 12px;
  color: ${(p) => (p.$muted ? "#777" : "#1f1f1f")};
`;

const CalculateButton = styled.button`
  flex: none;
  height: 28px;
  margin: 7px 5px 0 7px;
  border-radius: 3px;
  background-color: #84b8c9;
  font-size: 12px;
  color: #fff;
`;

const BottomShade = styled.div`
  position: absolute;
  right: 9%;
  bottom: 0;
  left: 9%;
  height: 28px;
  background: linear-gradient(to top, rgba(0, 0, 0, 0.1), transparent);
  mask-image: linear-gradient(to right, transparent, #000 25%, #000 85%, transparent);
  pointer-events: none;
`;
